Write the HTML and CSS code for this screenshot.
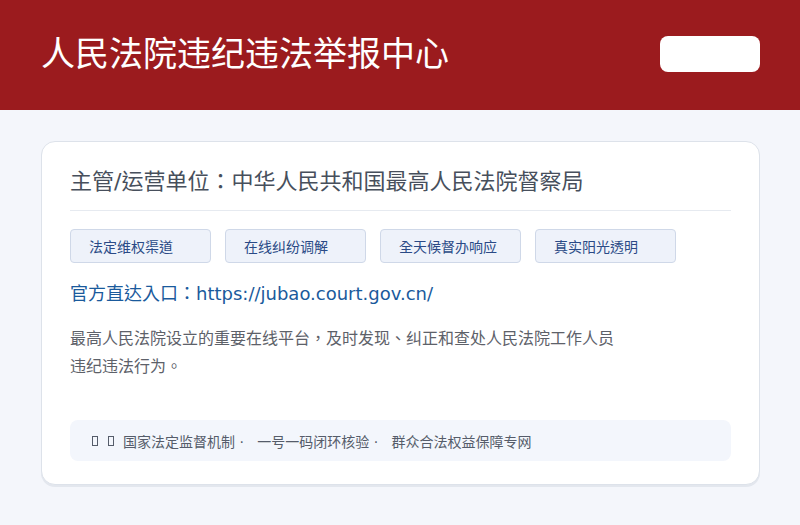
FILE: index.html
```html
<!DOCTYPE html>
<html lang="en">
<head>
    <meta charset="UTF-8">
    <meta name="viewport" content="width=device-width, initial-scale=1.0">
    <title>人民法院违纪违法举报中心</title>
    <link rel="stylesheet" href="styles.css">
</head>
<body>
    <div class="topbar">
        <h1 class="topbar-title">人民法院违纪违法举报中心</h1>
        <div class="topbar-badge"></div>
    </div>

    <div class="page">
        <div class="info-card">
            <h2 class="info-owner">主管/运营单位：中华人民共和国最高人民法院督察局</h2>

            <div class="info-tags">
                <span class="info-tag">法定维权渠道</span>
                <span class="info-tag">在线纠纷调解</span>
                <span class="info-tag">全天候督办响应</span>
                <span class="info-tag">真实阳光透明</span>
            </div>

            <p class="info-link">官方直达入口：https://jubao.court.gov.cn/</p>

            <p class="info-desc">最高人民法院设立的重要在线平台，及时发现、纠正和查处人民法院工作人员<br>违纪违法行为。</p>

            <div class="info-footer">
                <span class="footer-icons"><span class="tofu"></span><span class="tofu"></span></span>
                <span class="footer-text">国家法定监督机制 ·   一号一码闭环核验 ·   群众合法权益保障专网</span>
            </div>
        </div>
    </div>
</body>
</html>
```

FILE: styles.css
```css
* {
    margin: 0;
    padding: 0;
    box-sizing: border-box;
}

body {
    font-family: "DejaVu Sans", "Noto Sans CJK TC", sans-serif;
    background: #f4f6fb;
    color: #474f5c;
    min-height: 100vh;
}

.topbar {
    height: 110px;
    background: #9b1b1e;
    display: flex;
    align-items: center;
    justify-content: space-between;
    padding: 0 40px 0 41px;
}

.topbar-title {
    font-size: 34px;
    font-weight: 400;
    line-height: 40px;
    color: #ffffff;
    margin-top: -3px;
}

.topbar-badge {
    width: 100px;
    height: 36px;
    background: #ffffff;
    border-radius: 8px;
    margin-top: -2px;
}

.page {
    padding: 31px 40px 40px 41px;
}

.info-card {
    background: #ffffff;
    border: 1px solid #dde2ea;
    border-radius: 14px;
    box-shadow: 0 2px 0 #e3e7ee;
    padding: 25px 28px 24px 28px;
    height: 344px;
}

.info-owner {
    font-size: 22px;
    font-weight: 400;
    color: #474f5c;
    line-height: 30px;
    padding-bottom: 13px;
    border-bottom: 1px solid #e6eaf0;
}

.info-tags {
    display: flex;
    gap: 14px;
    margin-top: 18px;
}

.info-tag {
    width: 141px;
    height: 34px;
    display: flex;
    align-items: center;
    padding-left: 18px;
    background: #eef2fa;
    border: 1px solid #cfd8e8;
    border-radius: 4px;
    font-size: 14px;
    color: #2a4a86;
}

.info-link {
    margin-top: 18px;
    font-size: 18px;
    line-height: 26px;
    color: #1a5a9c;
}

.info-desc {
    margin-top: 18px;
    font-size: 16px;
    line-height: 28px;
    color: #5d6169;
}

.info-footer {
    margin-top: 39px;
    height: 41px;
    background: #f3f6fc;
    border-radius: 8px;
    display: flex;
    align-items: center;
    padding-left: 22px;
    font-size: 14px;
    color: #555c6a;
}

.footer-text {
    white-space: pre;
}

.footer-icons {
    display: inline-flex;
    gap: 10px;
    margin-right: 9px;
    padding-top: 1px;
}

.tofu {
    width: 6px;
    height: 10px;
    border: 1px solid #555c6a;
}
```
